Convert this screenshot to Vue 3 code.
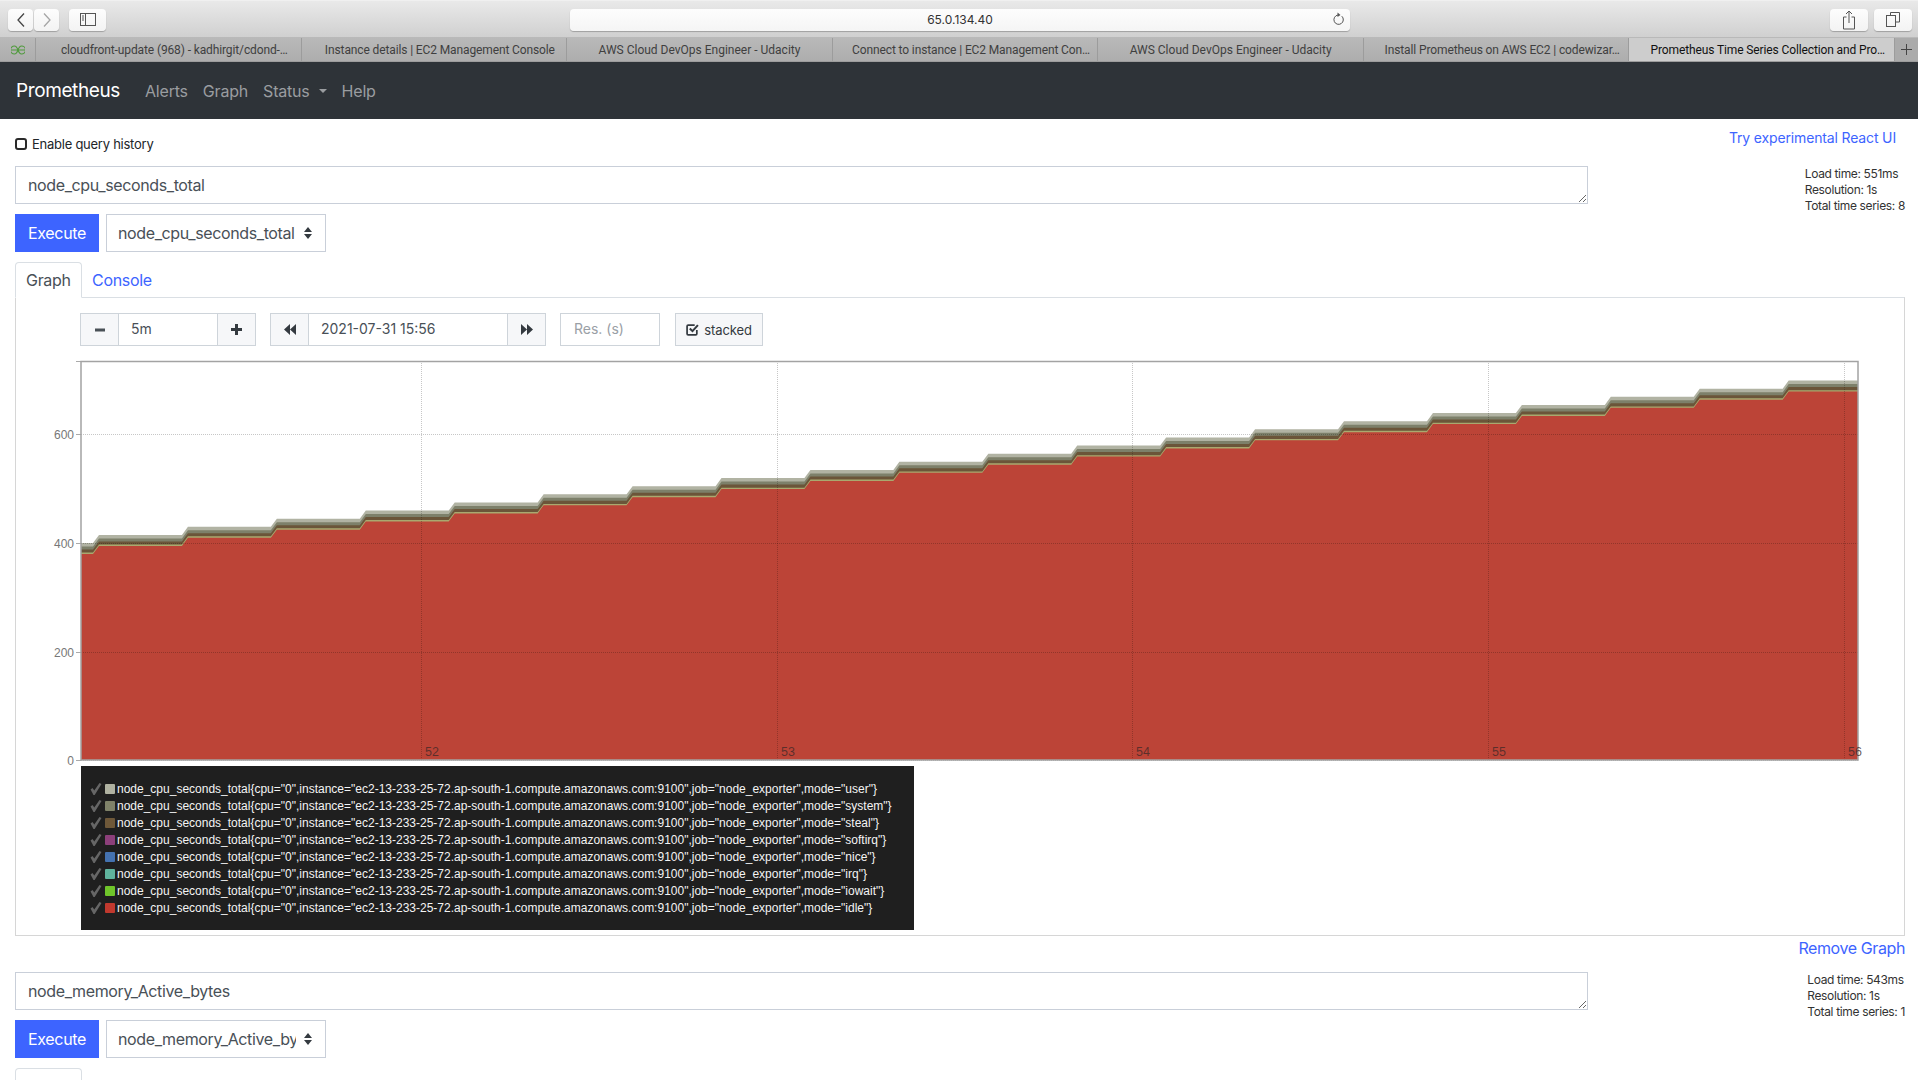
<template>
  <div class="page">
    <div class="toolbar">
      <div class="nav-pair">
        <button class="tool-btn arrow-btn">
          <svg width="10" height="16" viewBox="0 0 10 16"><path d="M8 1.5 2 8l6 6.5" fill="none" stroke="#444" stroke-width="1.3" /></svg>
        </button>
        <button class="tool-btn arrow-btn">
          <svg width="10" height="16" viewBox="0 0 10 16"><path d="M2 1.5 8 8l-6 6.5" fill="none" stroke="#a5a5a5" stroke-width="1.3" /></svg>
        </button>
      </div>
      <button class="tool-btn side-btn">
        <svg width="16" height="13" viewBox="0 0 16 13"><rect x=".5" y=".5" width="15" height="12" fill="none" stroke="#555" /><path d="M5.5 .5v12M2 3h2M2 5h2M2 7h2" stroke="#555" fill="none" /></svg>
      </button>
      <div class="url-bar">
        <span>65.0.134.40</span>
        <svg class="reload" width="12" height="14" viewBox="0 0 12 14"><path d="M9.8 4.2A4.7 4.7 0 1 1 6 3" fill="none" stroke="#555" stroke-width="1" /><path d="M5.5 .5 8.5 3l-3 2z" fill="#555" /></svg>
      </div>
      <button class="tool-btn end-btn">
        <svg width="14" height="20" viewBox="0 0 14 20"><path d="M4.5 7H1.5v12h11V7H9.500M7 13V1.500M4 4l3-3 3 3" fill="none" stroke="#555" /></svg>
      </button>
      <button class="tool-btn end-btn">
        <svg width="14" height="15" viewBox="0 0 14 15"><path d="M4.500 3V.5h9v9.500H10" fill="none" stroke="#555" /><rect x=".5" y="3.500" width="9" height="11" fill="none" stroke="#555" /></svg>
      </button>
    </div>

    <div class="tab-strip">
      <div class="pinned">
        <svg width="14" height="10" viewBox="0 0 14 10"><path d="M0 5h14M3.500 1c4 0 3 8 7 8M10.500 1c-4 0-3 8-7 8M3.500 1A4 4 0 0 0 3.500 9M10.500 1a4 4 0 0 1 0 8" fill="none" stroke="#4f9a3c" stroke-width="1.100" /></svg>
      </div>
      <div
        v-for="(tab, i) in browserTabs"
        :key="i"
        class="browser-tab"
        :class="{ active: i === browserTabs.length - 1, long: tab.length > 40 }"
      >{{ tab }}</div>
      <div class="new-tab">
        <svg width="11" height="11" viewBox="0 0 11 11"><path d="M5.500 0v11M0 5.500h11" stroke="#444" /></svg>
      </div>
    </div>

    <nav class="navbar">
      <span class="brand">Prometheus</span>
      <a class="nav-link">Alerts</a>
      <a class="nav-link">Graph</a>
      <a class="nav-link status">Status<i class="caret"></i></a>
      <a class="nav-link">Help</a>
    </nav>

    <main class="content">
      <div class="top-row">
        <label class="history"><span class="check-box"></span>Enable query history</label>
        <a class="react-link">Try experimental React UI</a>
      </div>

      <section v-for="(q, n) in queries" :key="n" class="query">
        <div class="query-head">
          <div>
            <textarea class="expr" readonly :value="q.expr"></textarea>
            <div class="exec-row">
              <button class="execute">Execute</button>
              <div class="metric-select">
                <span class="metric-name">{{ q.expr }}</span>
                <svg width="8" height="12" viewBox="0 0 8 12"><path d="M4 0 8 5H0zM4 12 0 7h8z" fill="#343a40" /></svg>
              </div>
            </div>
          </div>
          <div class="eval-stats">
            <div>Load time: {{ q.load }}</div>
            <div>Resolution: 1s</div>
            <div>Total time series: {{ q.total }}</div>
          </div>
        </div>

        <div class="tabs">
          <a class="tab on">Graph</a>
          <a class="tab">Console</a>
        </div>

        <div class="panel" :class="{ open: n === 0 }">
          <template v-if="n === 0">
            <div class="controls">
              <div class="group range">
                <button class="addon">
                  <svg width="10" height="10" viewBox="0 0 10 10"><rect y="3.500" width="10" height="3" fill="#495057" /></svg>
                </button>
                <span class="field">5m</span>
                <button class="addon">
                  <svg width="11" height="11" viewBox="0 0 11 11"><path d="M4 0h3v4h4v3H7v4H4V7H0V4h4z" fill="#343a40" /></svg>
                </button>
              </div>
              <div class="group end-time">
                <button class="addon">
                  <svg width="12" height="11" viewBox="0 0 12 11"><path d="M6 0v11L0 5.500zM12 0v11L6 5.500z" fill="#343a40" /></svg>
                </button>
                <span class="field">2021-07-31 15:56</span>
                <button class="addon">
                  <svg width="12" height="11" viewBox="0 0 12 11"><path d="M0 0v11l6-5.500zM6 0v11l6-5.500z" fill="#343a40" /></svg>
                </button>
              </div>
              <span class="res">Res. (s)</span>
              <button class="stacked">
                <svg width="13" height="13" viewBox="0 0 12 12"><path d="M10 6.500V10a1 1 0 0 1-1 1H2a1 1 0 0 1-1-1V3a1 1 0 0 1 1-1h6" fill="none" stroke="#343a40" stroke-width="1.600" /><path d="M3.500 5 6 7.500 11 2" fill="none" stroke="#343a40" stroke-width="1.900" /></svg>
                stacked
              </button>
            </div>

            <svg class="chart" width="1888" height="410" viewBox="16 355 1888 410">
              <path v-for="layer in layers" :key="layer.color" :d="stepArea(layer.off)" :fill="layer.color" />
              <path v-for="x in gridX" :key="x" :d="`M${x} 361V760`" class="grid" />
              <path v-for="t in yTicks" :key="t.label" :d="`M81 ${t.y}H1858`" class="grid" />
              <path v-for="t in yTicks" :key="'t' + t.label" :d="`M76 ${t.y}H81`" stroke="#aaa" />
              <path d="M76 361.500H81" stroke="#aaa" />
              <rect x="81" y="361.500" width="1777" height="398.500" fill="none" stroke="#a3a3a3" stroke-width="1.500" />
              <text v-for="t in yTicks" :key="'l' + t.label" x="74" :y="t.y + 4.500" text-anchor="end" class="y-label">{{ t.label }}</text>
              <text v-for="(x, i) in gridX" :key="'x' + x" :x="x + 3.500" y="755.500" class="x-label">{{ 52 + i }}</text>
            </svg>

            <div class="legend">
              <div v-for="m in modes" :key="m.name" class="legend-row">
                <svg class="legend-check" width="12" height="12" viewBox="0 0 11 12"><path d="M0 6.500 2 5 3.800 7.500 9 0 11 1 4.200 12H3z" fill="#666" /></svg>
                <i class="swatch" :style="{ background: m.color }"></i>
                <span>node_cpu_seconds_total{cpu="0",instance="ec2-13-233-25-72.ap-south-1.compute.amazonaws.com:9100",job="node_exporter",mode="{{ m.name }}"}</span>
              </div>
            </div>
          </template>
        </div>

        <div v-if="n === 0" class="remove-row"><a class="remove">Remove Graph</a></div>
      </section>
    </main>
  </div>
</template>

<script setup>
const browserTabs = [
  "cloudfront-update (968) - kadhirgit/cdond-…",
  "Instance details | EC2 Management Console",
  "AWS Cloud DevOps Engineer - Udacity",
  "Connect to instance | EC2 Management Con…",
  "AWS Cloud DevOps Engineer - Udacity",
  "Install Prometheus on AWS EC2 | codewizar…",
  "Prometheus Time Series Collection and Pro…",
];

const queries = [
  { expr: "node_cpu_seconds_total", load: "551ms", total: 8 },
  { expr: "node_memory_Active_bytes", load: "543ms", total: 1 },
];

const modes = [
  { name: "user", color: "#b0b2a1" },
  { name: "system", color: "#7f8269" },
  { name: "steal", color: "#6e5839" },
  { name: "softirq", color: "#8c3f7a" },
  { name: "nice", color: "#4472b0" },
  { name: "irq", color: "#5fb39d" },
  { name: "iowait", color: "#6fc52a" },
  { name: "idle", color: "#c1392e" },
];

const gridX = [421.5, 777.5, 1132.5, 1488.5, 1844.5];
const yTicks = [
  { label: 0, y: 760.5 },
  { label: 200, y: 652.5 },
  { label: 400, y: 543.5 },
  { label: 600, y: 434.5 },
];

// stacked bands, drawn back to front
const layers = [
  { off: 11, color: "#b1b3a3" },
  { off: 7.5, color: "#7d806a" },
  { off: 4.5, color: "#6b5539" },
  { off: 1.4, color: "#a9a96f" },
  { off: 0, color: "#bc4437" },
];

const stepArea = (off) => {
  let y = 554;
  let d = `M81 760V${y - off}`;
  for (let i = 0; i < 20; i++) {
    const x = 93 + 88.93 * i;
    y -= 8.12;
    d += `L${x} ${y + 8.12 - off}L${x + 6} ${y - off}`;
  }
  return `${d}L1858 ${y - off}V760Z`;
};
</script>

<style scoped>
.page {
  width: 1918px;
  height: 1080px;
  overflow: hidden;
  background: #fff;
  font-family: Inter, "Liberation Sans", sans-serif;
  color: #212529;
}

button {
  font-family: inherit;
  padding: 0;
  margin: 0;
}

.toolbar {
  height: 37px;
  box-sizing: border-box;
  display: flex;
  align-items: center;
  padding: 1px 6px 0 8px;
  background: linear-gradient(#e9e9e9, #d0d0d0);
  border-top: 1px solid #f0f0f0;
}

.tool-btn {
  height: 22px;
  background: linear-gradient(#fdfdfd, #f3f3f3);
  border: 0;
  border-radius: 4px;
  box-shadow: 0 1px 1px rgba(0, 0, 0, 0.25);
  display: flex;
  align-items: center;
  justify-content: center;
}

.nav-pair {
  display: flex;
  gap: 1px;
}

.arrow-btn {
  width: 25px;
}

.side-btn {
  width: 37px;
  margin-left: 10px;
}

.url-bar {
  width: 780px;
  height: 22px;
  margin: 0 auto 0 464px;
  position: relative;
  background: linear-gradient(#fdfdfd, #f5f5f5);
  border-radius: 4px;
  box-shadow: 0 1px 1px rgba(0, 0, 0, 0.25);
  text-align: center;
  font-size: 12px;
  line-height: 22px;
  color: #333;
}

.reload {
  position: absolute;
  right: 6px;
  top: 3px;
}

.end-btn {
  width: 38px;
  margin-left: 6px;
}

.tab-strip {
  height: 25px;
  display: flex;
  background: #ababab;
  border-top: 1px solid #b9b9b9;
  border-bottom: 1px solid #9d9d9d;
  box-sizing: border-box;
}

.pinned {
  width: 36px;
  display: flex;
  align-items: center;
  justify-content: center;
  background: linear-gradient(#b9b9b9, #adadad);
  border-right: 1px solid #9c9c9c;
  box-sizing: border-box;
}

.browser-tab {
  flex: 1 1 0;
  min-width: 0;
  box-sizing: border-box;
  text-align: center;
  font-family: Roboto, sans-serif;
  font-size: 12px;
  line-height: 25px;
  white-space: nowrap;
  color: #3f3f3f;
  background: linear-gradient(#b9b9b9, #adadad);
  border-right: 1px solid #9c9c9c;
}

.browser-tab.long {
  text-indent: 12px;
  letter-spacing: -0.12px;
}

.browser-tab.active {
  background: #cdcdcd;
  color: #111;
}

.new-tab {
  width: 23px;
  display: flex;
  align-items: center;
  justify-content: center;
}

.navbar {
  height: 57px;
  background: #2e3338;
  display: flex;
  align-items: center;
  padding-left: 16px;
}

.brand {
  color: #fff;
  font-size: 19px;
  width: 129px;
  letter-spacing: -0.4px;
}

.nav-link {
  color: #9a9da0;
  font-size: 16px;
  letter-spacing: -0.2px;
  margin-right: 15px;
}

.status {
  display: flex;
  align-items: center;
}

.caret {
  width: 0;
  height: 0;
  margin-left: 9px;
  border: 4px solid transparent;
  border-top-color: #9a9da0;
  border-bottom: 0;
}

.content {
  padding: 0 13px 0 15px;
}

.top-row {
  height: 47px;
  display: flex;
  justify-content: space-between;
  align-items: flex-start;
}

.history {
  display: flex;
  align-items: center;
  margin-top: 15px;
  font-size: 13px;
  line-height: 20px;
  letter-spacing: -0.25px;
  color: #212529;
}

.check-box {
  width: 12px;
  height: 12px;
  box-sizing: border-box;
  margin-right: 5px;
  border: 2px solid #2a2a2a;
  border-radius: 3px;
  background: #fff;
}

.react-link {
  margin: 9px 9px 0 0;
  font-size: 14px;
  line-height: 20px;
  letter-spacing: -0.15px;
  color: #3d64ff;
}

.query-head {
  display: grid;
  grid-template-columns: 1573px 1fr;
}

.expr {
  display: block;
  width: 100%;
  height: 38px;
  box-sizing: border-box;
  padding: 6px 12px;
  border: 1px solid #c9cfd9;
  border-radius: 0;
  outline: none;
  resize: vertical;
  overflow: hidden;
  font-family: inherit;
  font-size: 16px;
  line-height: 24px;
  letter-spacing: -0.38px;
  color: #495057;
}

.exec-row {
  display: flex;
  gap: 7px;
  margin-top: 10px;
}

.execute {
  width: 84px;
  height: 38px;
  border: 0;
  background: #3d64ff;
  color: #fff;
  font-size: 16px;
  letter-spacing: -0.3px;
}

.metric-select {
  width: 220px;
  height: 38px;
  box-sizing: border-box;
  display: flex;
  align-items: center;
  padding: 0 13px 0 11px;
  gap: 8px;
  border: 1px solid #c9cfd9;
  font-size: 16px;
  letter-spacing: -0.38px;
  color: #495057;
}

.metric-name {
  width: 178px;
  overflow: hidden;
  white-space: nowrap;
}

.eval-stats {
  justify-self: end;
  font-size: 12px;
  line-height: 16px;
  letter-spacing: -0.35px;
  color: #333;
}

.tabs {
  display: flex;
  margin-top: 10px;
  height: 35px;
}

.tab {
  padding: 0 9px 0 10px;
  line-height: 36px;
  font-size: 16px;
  letter-spacing: -0.3px;
  color: #3d64ff;
}

.tab.on {
  width: 67px;
  box-sizing: border-box;
  padding: 0 0 0 10px;
  color: #495057;
  background: #fff;
  border: 1px solid #dadfe4;
  border-bottom-color: #fff;
  border-radius: 4px 4px 0 0;
  height: 36px;
  line-height: 35px;
  position: relative;
  z-index: 1;
}

.panel {
  border-top: 1px solid #dadfe4;
}

.panel.open {
  width: 1890px;
  height: 639px;
  box-sizing: border-box;
  border: 1px solid #d6d6d6;
  border-top-color: #dadfe4;
  padding-top: 15px;
}

.controls {
  display: flex;
  align-items: stretch;
  height: 33px;
  margin-left: 64px;
  font-size: 14px;
  color: #495057;
}

.group {
  display: flex;
  box-sizing: border-box;
  border: 1px solid #ced4da;
}

.range {
  width: 176px;
  margin-right: 14px;
}

.end-time {
  width: 276px;
  margin-right: 14px;
}

.addon {
  flex: none;
  width: 37px;
  border: 0;
  background: #f6f7f9;
  display: flex;
  align-items: center;
  justify-content: center;
}

.field {
  flex: 1;
  padding-left: 12px;
  line-height: 30px;
  border-left: 1px solid #ced4da;
  border-right: 1px solid #ced4da;
}

.res {
  width: 100px;
  box-sizing: border-box;
  padding-left: 13px;
  line-height: 30px;
  border: 1px solid #ced4da;
  margin-right: 15px;
  color: #9aa0a6;
}

.stacked {
  width: 88px;
  border: 1px solid #ced4da;
  background: #f6f7f9;
  color: #343a40;
  font-size: 13px;
  letter-spacing: -0.1px;
  display: flex;
  align-items: center;
  justify-content: center;
  gap: 5px;
}

.chart {
  display: block;
  margin-top: 9px;
  overflow: visible;
}

.grid {
  stroke: rgba(0, 0, 0, 0.22);
  stroke-dasharray: 1 1;
  fill: none;
}

.y-label {
  font-family: "Liberation Sans", sans-serif;
  font-size: 12px;
  fill: #777;
}

.x-label {
  font-family: "Liberation Sans", sans-serif;
  font-size: 12.5px;
  fill: rgba(60, 40, 40, 0.75);
}

.legend {
  width: 833px;
  height: 164px;
  box-sizing: border-box;
  margin: 1px 0 0 65px;
  padding: 14px 0 0 9px;
  background: #1f1f1f;
  font-family: "Liberation Sans", sans-serif;
  font-size: 12px;
  color: #f4f4f4;
}

.legend-row {
  display: flex;
  align-items: center;
  height: 17px;
  white-space: nowrap;
}

.swatch {
  width: 10px;
  height: 10px;
  margin: 0 2px 0 3px;
  border-radius: 1px;
}

.remove-row {
  width: 1890px;
  height: 36px;
  text-align: right;
}

.remove {
  font-size: 16px;
  line-height: 24px;
  letter-spacing: -0.4px;
  color: #3d64ff;
}
</style>

<style>
html,
body {
  overflow: hidden;
}
</style>
